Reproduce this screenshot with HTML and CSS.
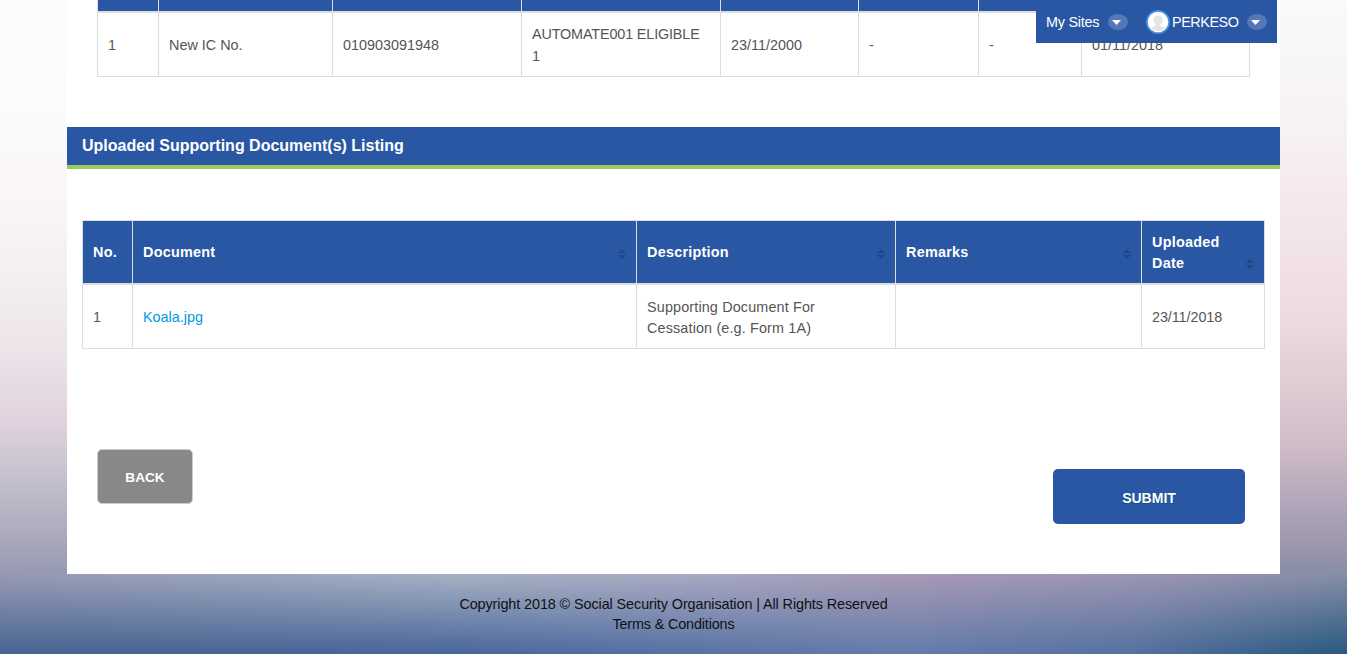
FILE: index.html
```html
<!DOCTYPE html>
<html lang="en">
<head>
<meta charset="utf-8">
<title>Uploaded Supporting Document(s)</title>
<link rel="stylesheet" href="styles.css">
</head>
<body>
<nav class="userbar">
  <a class="sites">My Sites</a>
  <svg class="drop" viewBox="0 0 20 16"><ellipse cx="10" cy="8" rx="10" ry="8"/><path d="M4 6h9l-4.500 5z"/></svg>
  <svg class="avatar" viewBox="0 0 24 24"><circle class="ring" cx="12" cy="12" r="12"/><circle class="disc" cx="12" cy="12" r="10.300"/><path d="M12 5.500c-3 0-4.500 2-4.500 4.500 0 2 1 3 2 4v2c-2 .5-3.500 1-4 2.500 4 3.500 9 3.500 13 0-.5-1.500-2-2-4-2.500v-2c1.500-1 2-2 2-4 0-2.500-1.500-4.500-4.500-4.500z"/></svg>
  <a class="user">PERKESO</a>
  <svg class="drop" viewBox="0 0 20 16"><ellipse cx="10" cy="8" rx="10" ry="8"/><path d="M4 6h9l-4.500 5z"/></svg>
</nav>
<div class="frame">
  <div class="side side-left"></div>
  <main class="content">
    <table class="grid people">
      <colgroup><col class="p1"><col class="p2"><col class="p3"><col class="p4"><col class="p5"><col class="p6"><col class="p7"><col class="p8"></colgroup>
      <thead><tr><th></th><th></th><th></th><th></th><th></th><th></th><th></th><th></th></tr></thead>
      <tbody><tr><td>1</td><td>New IC No.</td><td>010903091948</td><td><span class="caps">AUTOMATE001 ELIGIBLE</span> 1</td><td>23/11/2000</td><td>-</td><td>-</td><td>01/11/2018</td></tr></tbody>
    </table>
    <h2 class="title"><span>Uploaded Supporting Document(s) Listing</span></h2>
    <table class="grid docs">
      <colgroup><col class="d1"><col class="d2"><col class="d3"><col class="d4"><col class="d5"></colgroup>
      <thead><tr>
        <th>No.</th>
        <th><div class="head"><span>Document</span><svg class="sort" viewBox="0 0 8 10"><path d="M0 4l4-4 4 4zM0 6h8l-4 4z"/></svg></div></th>
        <th><div class="head"><span>Description</span><svg class="sort" viewBox="0 0 8 10"><path d="M0 4l4-4 4 4zM0 6h8l-4 4z"/></svg></div></th>
        <th><div class="head"><span>Remarks</span><svg class="sort" viewBox="0 0 8 10"><path d="M0 4l4-4 4 4zM0 6h8l-4 4z"/></svg></div></th>
        <th><div class="head two-line"><span>Uploaded<br>Date</span><svg class="sort" viewBox="0 0 8 10"><path d="M0 4l4-4 4 4zM0 6h8l-4 4z"/></svg></div></th>
      </tr></thead>
      <tbody><tr><td>1</td><td><a class="file">Koala.jpg</a></td><td class="desc">Supporting Document For<br>Cessation (e.g. Form 1A)</td><td></td><td class="date">23/11/2018</td></tr></tbody>
    </table>
    <div class="actions">
      <button class="btn back">BACK</button>
      <button class="btn submit">SUBMIT</button>
    </div>
  </main>
  <div class="side side-right"></div>
</div>
<footer class="footer">
  <p class="copy">Copyright 2018 © Social Security Organisation | All Rights Reserved</p>
  <p class="terms">Terms &amp; Conditions</p>
</footer>
</body>
</html>
```
FILE: styles.css
```css
* { box-sizing: border-box; }
body {
  margin: 0;
  height: 654px;
  overflow: hidden;
  font: 14.4px/21px "Liberation Sans", Arial, sans-serif;
  color: #555;
}
.frame { display: grid; grid-template-columns: 67px 1213px 67px; height: 574px; }
.side-left {
  background: linear-gradient(#fdfdfd 0, #fcfafb 110px, #faf6f7 200px, #f4eff1 270px, #ede4ea 350px, #dfd1dd 425px, #cbc5d2 465px, #b0aebf 525px, #9799b4 574px);
}
.side-right {
  background: linear-gradient(#fbf9f9 0, #f6f2f3 130px, #f7ecef 165px, #f2e3e6 250px, #ebd9dd 330px, #dfccd4 385px, #cfbdc8 445px, #b6a8bb 497px, #9a96ac 550px, #858ea8 574px);
}
.content { background: #fff; }

.grid { border-spacing: 0; table-layout: fixed; border-right: 1px solid #ddd; }
.grid th, .grid td { padding: 0 10px; border-left: 1px solid #ddd; text-align: left; vertical-align: middle; }
.grid th { background: #2957a4; color: #fff; border-bottom: 2px solid #ddd; font-weight: bold; letter-spacing: .25px; }
.grid td { border-bottom: 1px solid #ddd; height: 64px; }
.people { width: 1153px; margin: 0 0 50px 30px; line-height: 22px; }
.people th { height: 13px; }
.p1 { width: 61px; } .p2 { width: 174px; } .p3 { width: 189px; } .p4 { width: 199px; }
.p5 { width: 138px; } .p6 { width: 120px; } .p7 { width: 103px; } .p8 { width: 168px; }
.caps { letter-spacing: -.15px; }

.title {
  margin: 0;
  height: 42px;
  padding: 0 15px;
  background: #2957a4;
  border-bottom: 4px solid #9bcb5a;
  color: #fff;
  font-size: 16px;
  line-height: 37px;
}

.docs { width: 1183px; margin: 51px 0 0 15px; }
.docs th { height: 65px; border-top: 1px solid #ddd; }
.docs td { padding-top: 2px; }
.desc { letter-spacing: .14px; }
.date { letter-spacing: -.08px; }
.d1 { width: 50px; } .d2 { width: 504px; } .d3 { width: 259px; } .d4 { width: 246px; } .d5 { width: 123px; }
.head { display: flex; justify-content: space-between; align-items: flex-end; }
.two-line { padding-top: 2px; }
.sort { width: 8px; height: 10px; margin-bottom: 4px; fill: #214683; }
.two-line .sort { margin-bottom: 5px; }
.file { color: #009ae1; }

.actions { display: flex; justify-content: space-between; align-items: flex-start; padding: 100px 35px 0 30px; }
.btn {
  padding: 3px 0 0;
  border: 0;
  border-radius: 5px;
  color: #fff;
  font: bold 14px/20px "Liberation Sans", Arial, sans-serif;
}
.back { width: 96px; height: 55px; border: 1px solid #ccc; background: #888; font-size: 13.6px; }
.submit { width: 192px; height: 55px; margin-top: 20px; background: #2957a4; text-shadow: 0 1px 1px #065a7c; }

.footer {
  position: relative;
  height: 80px;
  padding-top: 20px;
  text-align: center;
  color: #111;
  line-height: 20px;
  background: linear-gradient(90deg, #46648f 0, #48669a 450px, #647cab 900px, #55729f 1130px, #28597f 1347px);
}
.footer::before {
  content: "";
  position: absolute;
  inset: 0;
  background: linear-gradient(90deg, #9799b4 0, #9ca6bc 250px, #a5b1c3 450px, #a8a9c0 700px, #a799b5 920px, #9b95b3 1150px, #868ea7 1347px);
  -webkit-mask-image: linear-gradient(#000, transparent);
  mask-image: linear-gradient(#000, transparent);
}
.footer p { position: relative; margin: 0; }
.copy { letter-spacing: -.09px; }
.terms { letter-spacing: -.15px; }

.userbar {
  position: absolute;
  z-index: 2;
  top: 0;
  left: 1036px;
  width: 241px;
  height: 43px;
  padding: 0 10px;
  display: flex;
  align-items: center;
  background: #2957a4;
  color: #fff;
}
.drop { width: 20px; height: 16px; fill: #fff; }
.drop ellipse { fill: #5478b6; }
.sites, .user { padding-top: 2px; }
.sites { width: 62px; letter-spacing: -.25px; }
.avatar { width: 24px; height: 24px; margin: 0 2px 0 18px; fill: #e4e4e4; }
.ring { fill: #4c8fdf; }
.disc { fill: #fff; }
.user { width: 75px; letter-spacing: -.45px; }
```
